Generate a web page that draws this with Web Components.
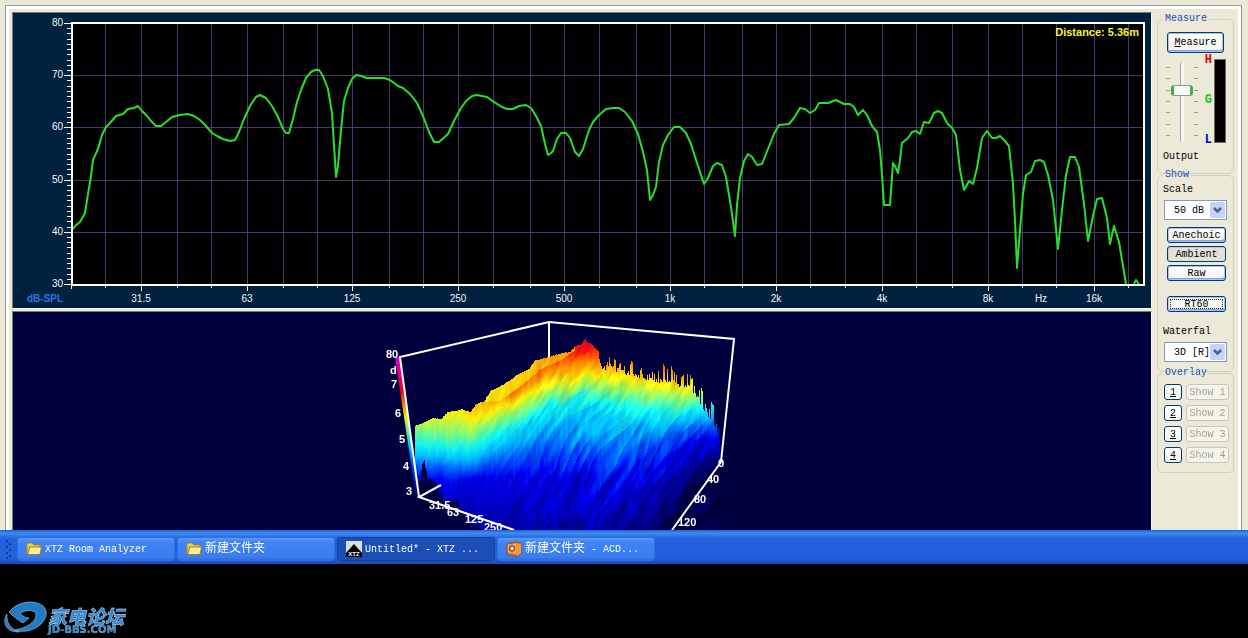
<!DOCTYPE html>
<html lang="en">
<head>
<meta charset="utf-8">
<title>XTZ Room Analyzer</title>
<style>
  body { margin: 0; min-height: 100vh; background: #000; font: 10px/14px "Liberation Mono", "Noto Sans CJK SC", monospace; color: #000; display: flex; flex-direction: column; }
</style>
</head>
<body>
<analyzer-window>
  <spl-chart slot="plots"></spl-chart>
  <waterfall-plot slot="plots"></waterfall-plot>
  <measure-panel slot="tools"></measure-panel>
</analyzer-window>
<task-bar>
  <task-button icon="folder">XTZ Room Analyzer</task-button>
  <task-button icon="folder"><span lang="zh" style="font-size:12px">新建文件夹</span></task-button>
  <task-button icon="xtz" active>Untitled* - XTZ ...</task-button>
  <task-button icon="acd"><span lang="zh" style="font-size:12px">新建文件夹</span> - ACD...</task-button>
</task-bar>
<forum-logo></forum-logo>

<script>
const define = (name, html, setup) => customElements.define(name, class extends HTMLElement {
  constructor() {
    super();
    this.attachShadow({ mode: 'open' }).innerHTML = typeof html === 'function' ? html(this) : html;
    if (setup) setup(this.shadowRoot, this);
  }
});

define('analyzer-window', `
<style>
  :host { display: block; background: #ece9d8; padding: 5px 6px 0 5px; }
  .page { border: solid #919b9c; border-width: 1px 1px 0; background: #fff; padding: 3px 3px 0; }
  .body { background: #ece9d8; padding: 3px 4px 0 3px; display: grid; grid-template-columns: minmax(0, 1fr) 77px; column-gap: 5px; }
  .plots { display: flex; flex-direction: column; gap: 2px; }
</style>
<div class="page"><div class="body">
  <div class="plots"><slot name="plots"></slot></div>
  <slot name="tools"></slot>
</div></div>`);

/* ---------- frequency response ---------- */
const gridX = [105,141,177,211,247,283,317,352,389,423,458,493,530,564,599,636,670,704,742,776,810,845,882,916,952,988,1022,1056,1094,1128];
const bands = { 141: '31.5', 247: '63', 352: '125', 458: '250', 564: '500', 670: '1k', 776: '2k', 882: '4k', 988: '8k', 1094: '16k' };
const response = '72,230 76,225 80,222 85,213 88,194 91,176 93,160 98,149 102,135 106,127 110,123 116,116 123,114 128,109 134,108 138,106 142,111 147,116 151,121 156,126 161,126 166,122 172,117 180,115 188,114 194,116 200,120 206,126 212,133 217,136 223,139 230,141 235,140 239,132 244,119 250,106 256,97 260,95 266,98 272,106 278,117 283,129 286,133 289,133 293,119 297,102 301,90 306,78 311,72 315,70 319,70 323,76 328,89 332,113 334,145 336,177 338,166 341,130 344,101 348,88 352,79 356,75 361,76 367,78 384,78 390,80 398,86 403,88 410,94 417,103 423,116 429,132 434,142 439,142 448,134 454,121 461,108 466,101 472,96 477,95 487,97 494,102 502,107 507,109 513,109 519,106 526,105 531,108 536,116 541,126 545,144 548,155 551,153 553,151 557,139 561,133 566,133 570,138 575,152 579,156 583,149 589,130 593,122 599,115 606,109 613,108 619,108 625,112 632,121 638,134 643,152 647,170 650,200 653,195 656,187 659,162 663,145 668,135 674,127 680,127 686,133 691,144 697,163 704,184 708,178 713,166 717,163 722,165 726,177 731,207 735,236 737,205 740,178 744,161 748,154 752,157 757,165 762,164 768,149 774,134 779,125 789,124 794,118 800,108 805,109 810,113 815,110 819,103 828,103 836,100 844,104 850,104 854,107 858,115 863,110 867,115 872,126 877,132 880,150 882,175 884,205 890,205 893,163 895,166 898,173 900,160 902,143 908,138 912,132 916,131 920,134 924,122 929,123 934,113 938,111 942,113 947,123 952,128 956,135 960,170 964,190 969,181 973,184 977,168 982,138 987,131 992,138 996,138 1000,136 1004,140 1009,146 1013,184 1015,220 1017,268 1020,230 1023,194 1026,175 1031,172 1035,161 1040,160 1044,162 1048,175 1053,200 1058,249 1062,210 1066,175 1070,157 1075,157 1079,167 1084,204 1088,241 1093,216 1097,199 1102,198 1107,218 1110,244 1114,226 1119,242 1126,284';

define('spl-chart', () => {
  const levels = [75, 127, 180, 232];
  let grid = '', ticks = '', labels = '';
  for (const y of levels) grid += `M72 ${y}.5H1143`;
  for (const x of gridX) {
    grid += `M${x}.5 23V284`;
    ticks += `M${x}.5 285v${bands[x] ? 6 : 3}`;
    if (bands[x]) labels += `<text x="${x}" y="302" text-anchor="middle">${bands[x]}</text>`;
  }
  for (let i = 0; i <= 50; i++) {
    const y = Math.round(23 + i * 5.22) + .5;
    ticks += `M${i % 10 ? 67 : 64} ${y}H71`;
  }
  [80, 70, 60, 50, 40, 30].forEach((v, i) => {
    labels += `<text x="63" y="${[26, 78, 130, 183, 235, 287][i]}" text-anchor="end">${v}</text>`;
  });
  return `
<style>
  :host { display: block; border: 1px solid; border-color: #7d7b6c #fff #fff #7d7b6c; background: #00213f; }
  svg { display: block; width: 100%; height: auto; font: 10px "Liberation Sans", Arial, sans-serif; fill: #f4f7fa; }
  .grid { stroke: #3e3c70; fill: none; }
  .tick { stroke: #fffff4; fill: none; }
  .curve { stroke: #28e028; stroke-width: 2; fill: none; stroke-linejoin: round; }
  .unit { fill: #2478e8; font-weight: bold; }
  .dist { fill: #f5f53a; font-size: 11px; font-weight: bold; }
</style>
<svg viewBox="13 13 1137 295" role="img" aria-label="Frequency response">
  <rect x="72" y="23" width="1072" height="262" fill="#000"/>
  <path class="grid" d="${grid}"/>
  <path class="tick" d="${ticks}M71.500 285v4"/>
  <polyline class="curve" points="${response}"/>
  <polyline class="curve" points="1134,284 1136,280 1139,284"/>
  <rect x="72" y="23" width="1072" height="262" fill="none" stroke="#fffff4" stroke-width="2"/>
  ${labels}
  <text class="unit" x="27" y="302">dB-SPL</text>
  <text x="1041" y="302" text-anchor="middle">Hz</text>
  <text class="dist" x="1139" y="36" text-anchor="end">Distance: 5.36m</text>
</svg>`.replace('13 13 1137 295', '13 13 1138 295');
});

/* ---------- 3D waterfall ---------- */
const palette = [[0,0,62],[0,0,150],[0,0,235],[0,95,255],[0,190,255],[20,245,235],[130,250,120],[250,240,10],[255,140,0],[255,20,10],[240,0,60]];
// Each row: x, then the height on screen where the level falls through 9, 8, 7 ... 0
const contours = [
  [415,380,400,418,429,444,455,465,476,515,560],
  [450,370,388,412,432,447,458,468,482,530,580],
  [470,365,390,418,434,448,459,468,478,530,585],
  [510,368,396,404,415,426,441,458,476,535,590],
  [550,355,370,383,394,405,423,446,470,540,595],
  [585,351,363,375,389,401,421,447,476,545,600],
  [620,342,362,377,392,406,430,453,480,530,575],
  [650,340,368,383,397,409,426,446,469,512,548],
  [680,340,372,386,400,412,422,433,450,482,508],
  [700,345,372,385,396,406,416,427,439,463,482],
  [722,350,376,388,398,406,414,424,438,454,466]];
const ridgeLine = [[480,402],[500,400],[520,386],[540,369],[560,360],[575,350]];
const skyline = [[415,426],[425,422],[433,418],[441,419],[447,412],[455,411],[462,409],[470,412],[476,404],[484,401],[491,390],[500,386],[510,380],[518,374],[529,369],[534,361],[545,358],[555,355],[563,353],[570,352],[574,347],[581,344],[585,338],[588,343],[591,344],[597,350],[601,367],[610,368],[625,372],[640,377],[655,380],[670,381],[680,385],[690,388],[697,397],[703,408],[712,420],[717,434],[721,450]];
const spikes = {586:341,590:343,594:348,598:351,607:362,609:357,610:364,614:359,615:360,619:364,620:363,624:366,630:364,631:361,632:362,640:370,641:368,642:374,647:375,649:374,652:372,654:374,658:371,663:364,664:366,667:369,671:366,672:370,674:372,676:375,681:377,682:376,683:375,687:374,690:375,691:379,692:378,694:386,699:390,701:388,702:391,705:404,706:408,709:409,711:402,712:404,713:405,716:424,718:428};
const floorLine = [[415,470],[419,478],[423,455],[427,472],[433,475],[440,488],[446,502],[454,495],[461,508],[470,520],[480,526],[490,534],[800,534]];

function along(points, x, k = 1) {
  for (let i = 1; i < points.length; i++) if (x <= points[i][0]) {
    const a = points[i - 1], b = points[i];
    return a[k] + (b[k] - a[k]) * (x - a[0]) / (b[0] - a[0]);
  }
  return points[points.length - 1][k];
}
function hash(a, b) {
  let n = Math.imul(a | 0, 374761393) ^ Math.imul(b | 0, 668265263);
  n = Math.imul(n ^ (n >>> 13), 1274126177);
  return ((n ^ (n >>> 16)) >>> 0) / 4294967295;
}
function noise(u, v) {
  const i = Math.floor(u), j = Math.floor(v);
  const s = (u - i) ** 2 * (3 - 2 * (u - i)), t = (v - j) ** 2 * (3 - 2 * (v - j));
  return (hash(i, j) * (1 - s) + hash(i + 1, j) * s) * (1 - t) + (hash(i, j + 1) * (1 - s) + hash(i + 1, j + 1) * s) * t - .5;
}
function drawSurface(canvas) {
  const ctx = canvas.getContext('2d'), img = ctx.createImageData(canvas.width, canvas.height);
  for (let x = 415; x <= 721; x++) {
    let top = along(skyline, x) + (hash(x, 3) - .5) * (x > 600 ? 5 : 1);
    if (spikes[x]) top = spikes[x];
    const bottom = along(floorLine, x) + hash(x, 9) * 7;
    const stops = contours[0].map((_, k) => k ? along(contours, x, k) : 0);
    const rough = Math.max(.15, Math.min(1, (x - 450) / 120));
    for (let y = Math.max(312, Math.round(top)); y < Math.min(530, bottom); y++) {
      let level = 9;
      if (y < stops[1]) level = Math.min(10, 9 + (stops[1] - y) / 12);
      else for (let k = 2; k < stops.length; k++) {
        if (y < stops[k]) { level = 11 - k - (y - stops[k - 1]) / (stops[k] - stops[k - 1]); break; }
        level = 0;
      }
      const behind = x > 480 && x < 575 && y < along(ridgeLine, x);
      if (behind) level = 7 + (x - 480) / 95;
      // ridges lean up and to the right, as the decay slices do
      const across = x * .84 + y * .54, down = y * .84 - x * .54;
      const saw = across / 10 + noise(across / 30, down / 60) * 3;
      const ridge = (saw - Math.floor(saw) - .5) * (.55 + noise(across / 15, down / 16));
      const depth = Math.max(.3, Math.min(1, (y - top) / 50));
      level += rough * depth * (ridge * .9 + noise(across / 6, down / 22) * .8) + noise(x / 2, y / 18) * .4;
      level = Math.max(0, Math.min(9.9, level));
      const i = Math.floor(level), f = level - i;
      const shade = 1 + noise(across / 3, down / 14) * .22 * rough;
      const o = ((y - 312) * canvas.width + x - 13) * 4;
      for (let c = 0; c < 3; c++) img.data[o + c] = (palette[i][c] * (1 - f) + palette[i + 1][c] * f) * shade;
      if (level < 5) img.data[o + 2] = Math.max(62, img.data[o + 2]);
      img.data[o + 3] = 255;
    }
  }
  ctx.putImageData(img, 0, 0);
}

define('waterfall-plot', `
<style>
  :host { display: grid; border: solid; border-width: 1px 1px 0; border-color: #7d7b6c #fff #fff #7d7b6c; background: #00003e; overflow: hidden; }
  canvas, svg { grid-area: 1 / 1; display: block; width: 100%; height: auto; }
  svg { font: bold 11px "Liberation Sans", Arial, sans-serif; fill: #fff; }
  .frame { stroke: #fff; stroke-width: 2; fill: none; }
</style>
<canvas width="1138" height="218"></canvas>
<svg viewBox="13 312 1138 218" role="img" aria-label="3D waterfall">
  <defs><linearGradient id="scale" x1="0" y1="0" x2="0" y2="1">
    <stop offset="0" stop-color="#d400d4"/><stop offset=".14" stop-color="#e00070"/><stop offset=".24" stop-color="#f00010"/><stop offset=".34" stop-color="#ff8000"/><stop offset=".43" stop-color="#f0f000"/><stop offset=".53" stop-color="#60f090"/><stop offset=".63" stop-color="#00c8ff"/><stop offset=".77" stop-color="#0040ff"/><stop offset="1" stop-color="#00005c"/>
  </linearGradient></defs>
  <path d="M395 357h5l19 140h-3z" fill="url(#scale)"/>
  <path class="frame" d="M419 497L400 357L549 322L734 339L721 462L672 530M549 322V357M441 485L419 497L514 530"/>
  <text x="386" y="358">80</text><text x="390" y="374">d</text><text x="391" y="388">7</text><text x="395" y="417">6</text><text x="399" y="443">5</text><text x="403" y="470">4</text><text x="406" y="495">3</text>
  <text x="429" y="509">31.5</text><text x="447" y="516">63</text><text x="465" y="523">125</text><text x="484" y="531">250</text>
  <text x="718" y="467">0</text><text x="707" y="483">40</text><text x="694" y="503">80</text><text x="678" y="526">120</text>
</svg>`, root => drawSurface(root.querySelector('canvas')));

/* ---------- controls ---------- */
define('xp-group', el => `
<style>
  :host { display: block; margin-bottom: -6px; }
  fieldset { margin: 0; padding: 0 3px 0 6px; min-width: 0; border: 1px solid #d0d0bf; border-radius: 5px; }
  legend { margin-left: -1px; padding: 0 2px; line-height: 14px; color: #1a4fc0; }
</style>
<fieldset><legend>${el.getAttribute('label')}</legend><slot></slot></fieldset>`);

define('xp-button', el => `
<style>
  :host { display: block; }
  button { display: block; box-sizing: border-box; width: 100%; height: var(--h, 16px); padding: 1px 0 0; font: inherit; line-height: 12px; color: #000;
    border: 1px solid #003c74; border-radius: 3px; background: linear-gradient(#fff, #f3f2ea); box-shadow: inset 0 0 0 1px #a9c4f2, inset -1px -2px 0 #7fa5e4; }
  :host([plain]) button { box-shadow: none; }
  :host([pressed]) button { background: #e2e2da; box-shadow: inset 1px 1px 1px #c8c8be; }
  :host([focused]) button { outline: 1px dotted #222; outline-offset: -4px; }
  button:disabled { color: #a1a192; border-color: #c9c7ba; background: #f5f4ea; box-shadow: none; }
</style>
<button type="button"${el.hasAttribute('disabled') ? ' disabled' : ''}${el.hasAttribute('pressed') ? ' aria-pressed="true"' : ''}><slot></slot></button>`);

define('xp-select', el => `
<style>
  :host { display: block; }
  label { display: block; margin-left: -1px; line-height: 14px; padding: 1px 0 3px; }
  .box { display: grid; width: 63px; }
  select, svg { grid-area: 1 / 1; }
  select { appearance: none; box-sizing: border-box; width: 100%; height: 20px; margin: 0; padding: 2px 16px 0 9px; border: 1px solid #7f9db9; border-radius: 0; background: #fff; color: #000; font: inherit; }
  svg { justify-self: end; align-self: center; margin-right: 2px; pointer-events: none; }
</style>
<label for="s">${el.getAttribute('label')}</label>
<div class="box"><select id="s"><option>${el.getAttribute('value')}</option></select>
<svg width="15" height="16" viewBox="0 0 15 16"><rect width="15" height="16" rx="2" fill="#c3d3fb"/><path d="M4 6l3.500 3.500L11 6" fill="none" stroke="#4d6185" stroke-width="2.500"/></svg></div>`);

define('output-level', () => {
  let marks = '';
  for (const y of [5, 16, 28, 39, 50, 62, 73]) marks += `M0 ${y}.5h4M28 ${y}.5h4`;
  return `
<style>
  :host { display: block; }
  .row { display: grid; grid-template-columns: 36px 12px 12px; column-gap: 1px; }
  .slide { display: grid; justify-items: center; padding-top: 9px; }
  .slide > * { grid-area: 1 / 1; }
  input { appearance: none; writing-mode: vertical-lr; direction: rtl; width: 22px; height: 80px; margin: 0; background: none; }
  input::-webkit-slider-runnable-track { appearance: none; width: 4px; height: 80px; background: #f7f6f0; border-left: 1px solid #a9a89a; border-radius: 2px; box-sizing: border-box; margin: 0 auto; }
  input::-webkit-slider-thumb { appearance: none; box-sizing: border-box; width: 22px; height: 11px; margin-left: -10px; border: 1px solid #8a9a9c; border-left: 3px solid #3fae4c; border-right: 3px solid #3fae4c; border-radius: 3px; background: #f7f7f3; }
  .letters { display: flex; flex-direction: column; justify-content: space-between; font: bold 12px/14px "Liberation Mono", monospace; text-align: right; padding-right: 1px; }
  .meter { box-sizing: border-box; width: 12px; height: 84px; margin: 6px 0 4px; border: 1px solid #6f6d60; background: #000; }
  label { display: block; margin: 3px 0 0 -1px; line-height: 14px; }
</style>
<div class="row">
  <div class="slide"><svg width="32" height="80"><path d="${marks}" stroke="#9d9c8c"/></svg><input id="out" type="range" min="0" max="100" value="67"></div>
  <div class="letters"><span style="color:#e00000">H</span><span style="color:#10c820">G</span><span style="color:#0000c0">L</span></div>
  <div class="meter"></div>
</div>
<label for="out">Output</label>`;
});

define('measure-panel', `
<style>
  :host { display: block; padding: 0 0 20px; }
  .stack { display: flex; flex-direction: column; gap: 3px; padding: 7px 4px 0 3px; }
  .overlay { display: grid; grid-template-columns: 18px 43px; gap: 5px 4px; padding: 4px 0 9px; margin-right: -1px; }
  .wide { padding: 6px 6px 0 3px; }
  .gap { height: 9px; }
  .room { height: 12px; }
  u { text-underline-offset: 1px; }
</style>
<xp-group label="Measure">
  <div class="wide"><xp-button style="--h:21px"><u>M</u>easure</xp-button></div>
  <output-level></output-level>
  <div class="gap"></div>
</xp-group>
<xp-group label="Show">
  <xp-select label="Scale" value="50 dB"></xp-select>
  <div class="stack">
    <xp-button>Anechoic</xp-button>
    <xp-button pressed>Ambient</xp-button>
    <xp-button>Raw</xp-button>
    <div class="gap"></div>
    <xp-button focused>RT60</xp-button>
  </div>
  <div class="room"></div><xp-select label="Waterfal" value="3D [R]"></xp-select>
  <div class="gap"></div>
</xp-group>
<xp-group label="Overlay">
  <div class="overlay">
    <xp-button plain><u>1</u></xp-button><xp-button disabled>Show 1</xp-button>
    <xp-button plain><u>2</u></xp-button><xp-button disabled>Show 2</xp-button>
    <xp-button plain><u>3</u></xp-button><xp-button disabled>Show 3</xp-button>
    <xp-button plain><u>4</u></xp-button><xp-button disabled>Show 4</xp-button>
  </div>
</xp-group>`);

/* ---------- task bar ---------- */
define('task-bar', `
<style>
  :host { display: flex; align-items: center; gap: 2px; box-sizing: border-box; height: 34px; padding: 5px 0 1px 5px;
    background: linear-gradient(#1f5fd0, #3f8cf0 3px, #2f76e6 6px, #2560dc 9px, #2560dc 28px, #1a48b4); }
  svg { margin-right: 3px; }
</style>
<svg width="7" height="20" viewBox="0 0 7 20" aria-hidden="true"><path d="M1 1h2v2H1zM1 7h2v2H1zM1 13h2v2H1zM1 18h2v2H1zM4 4h2v2H4zM4 10h2v2H4zM4 16h2v2H4z" fill="#123a9c"/></svg>
<slot></slot>`);

const icons = {
  folder: '<path d="M1 13V3l1-1h4l2 2h6v8" fill="#f3c94a" stroke="#b08a20"/><path d="M2 13.500L3.500 6h12L14 13.500z" fill="#ffec96" stroke="#a87f1c"/>',
  xtz: '<rect width="16" height="16" fill="#dcdcdc"/><path d="M8 3l8 9v4H0v-4z" fill="#000"/><text x="8" y="15" font-size="6" font-weight="bold" text-anchor="middle" fill="#fff" font-family="Liberation Sans, sans-serif">XTZ</text>',
  acd: '<path d="M1 3l9-2 5 2v9l-5 3-9-2z" fill="#f08a2c" stroke="#9c4a14"/><path d="M11 2l4 1v9l-4 3z" fill="#f59a3a"/><path d="M2 4l8-1v9l-8-1z" fill="#f0b890"/><circle cx="6" cy="7.500" r="2.500" fill="#fff" stroke="#a04418" stroke-width="1.500"/>'
};
define('task-button', el => `
<style>
  :host { flex: 0 1 158px; min-width: 0; }
  button { display: flex; align-items: center; gap: 3px; box-sizing: border-box; width: 100%; height: 24px; padding: 0 8px; border: 1px solid #2f6fe8; border-radius: 3px;
    background: linear-gradient(#5b9bfa, #3f83f4 4px, #3b7df0 19px, #316bdc); color: #fff; font: inherit; white-space: nowrap; overflow: hidden; }
  :host([active]) button { background: #1c4fb6; border-color: #153f98; }
  svg { flex: none; }
  span { line-height: 16px; padding-top: 1px; }
</style>
<button type="button"><svg width="16" height="16" viewBox="0 0 16 16" aria-hidden="true">${icons[el.getAttribute('icon')]}</svg><span><slot></slot></span></button>`);

define('forum-logo', `
<style>
  :host { display: block; padding: 36px 0 0 4px; }
  svg { display: block; }
</style>
<svg width="126" height="38" viewBox="4 600 126 38" role="img" aria-label="家电论坛">
  <g stroke="#b9cbdc" stroke-width=".6" fill="#1f7ac8">
    <path d="M9 612C15 604 27 600 37 603C48 606 49 616 41 624C34 631 22 633 13 630C26 629 36 622 36 615C36 610 28 609 20 613C22 616 25 618 29 618L23 623C18 620 13 616 9 612Z"/>
    <path d="M7 614C3 620 3 632 19 632C11 629 6 623 7 614Z"/>
  </g>
  <g fill="#2c8ad6" stroke="#dce6ee" stroke-width=".4">
    <text x="48" y="624" font-family="Noto Sans CJK SC, sans-serif" font-weight="900" font-style="italic" font-size="19">家电论坛</text>
    <text x="48" y="633" font-family="DejaVu Sans, sans-serif" font-weight="bold" font-size="10" stroke-width=".2">JD-BBS.COM</text>
  </g>
</svg>`);
</script>
</body>
</html>
